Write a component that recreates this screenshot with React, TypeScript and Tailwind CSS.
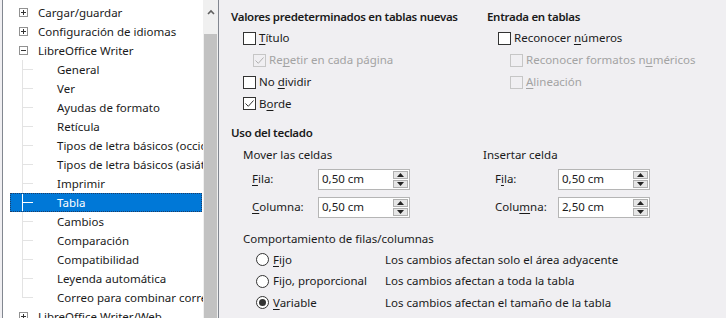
import React from 'react';

const font = { fontFamily: '"Noto Sans", "Open Sans", sans-serif' };

function U({ children }: { children: React.ReactNode }) {
  return <span className="underline underline-offset-2">{children}</span>;
}

function PlusBox({ open }: { open?: boolean }) {
  return (
    <svg width="9" height="9" viewBox="0 0 9 9" className="shrink-0">
      <rect x="0.5" y="0.5" width="8" height="8" fill="#fff" stroke="#919191" />
      <path d="M2 4.5h5" stroke="#333" />
      {!open && <path d="M4.5 2v5" stroke="#333" />}
    </svg>
  );
}

const children = [
  'General',
  'Ver',
  'Ayudas de formato',
  'Retícula',
  'Tipos de letra básicos (occidentales)',
  'Tipos de letra básicos (asiáticos)',
  'Imprimir',
  'Tabla',
  'Cambios',
  'Comparación',
  'Compatibilidad',
  'Leyenda automática',
  'Correo para combinar correspondencia',
];

function Tree() {
  return (
    <div className="relative ml-[2px] flex h-full w-[217px] shrink-0 border-x border-[#828790] bg-white">
      <div className="min-w-0 flex-1 overflow-hidden pt-[3px] text-[#1a1a1a]">
        <div className="flex h-[19px] items-center gap-[10px] whitespace-nowrap pl-[16px]">
          <PlusBox />
          <span>Cargar/guardar</span>
        </div>
        <div className="flex h-[19px] items-center gap-[10px] whitespace-nowrap pl-[16px]">
          <PlusBox />
          <span>Configuración de idiomas</span>
        </div>
        <div className="flex h-[19px] items-center gap-[10px] whitespace-nowrap pl-[16px]">
          <PlusBox open />
          <span>LibreOffice Writer</span>
        </div>
        <div className="relative">
          <div className="absolute left-[19px] top-0 h-[237px] w-px bg-[#e3e3e3]" />
          {children.map((c) =>
            c === 'Tabla' ? (
              <div
                key={c}
                className="relative ml-[7px] mr-px flex h-[19px] items-center whitespace-nowrap border border-dotted border-[#1f3d66] bg-[#0078d7] pl-[46px] text-white"
              >
                <div className="absolute left-[11px] top-[8px] h-px w-[11px] bg-white" />
                <div className="absolute left-[11px] top-0 h-[17px] w-px bg-white" />
                <span>{c}</span>
              </div>
            ) : (
              <div key={c} className="relative flex h-[19px] items-center whitespace-nowrap pl-[54px]">
                <div className="absolute left-[19px] top-[9px] h-px w-[11px] bg-[#e3e3e3]" />
                <span>{c}</span>
              </div>
            ),
          )}
        </div>
        <div className="flex h-[19px] items-center gap-[10px] whitespace-nowrap pl-[16px]">
          <PlusBox />
          <span>LibreOffice Writer/Web</span>
        </div>
      </div>
      <div className="flex w-[15px] shrink-0 flex-col bg-[#f0f0f0]">
        <div className="flex h-[34px] items-start justify-center pt-[9px]">
          <svg width="8" height="6" viewBox="0 0 8 6">
            <path d="M1 5l3-3 3 3" stroke="#606060" strokeWidth="1.6" fill="none" />
          </svg>
        </div>
        <div className="mx-px flex-1 bg-[#c2c2c2]" />
      </div>
    </div>
  );
}

function Check({ checked, disabled }: { checked?: boolean; disabled?: boolean }) {
  const c = disabled ? '#c6c6c6' : '#333';
  return (
    <svg width="13" height="13" viewBox="0 0 13 13" className="shrink-0">
      <rect x="0.5" y="0.5" width="12" height="12" fill={disabled ? '#f0eff2' : '#fff'} stroke={c} />
      {checked && (
        <path d="M2.5 6.5l2.8 2.8 5.2-5.8" stroke={disabled ? '#b0b0b0' : '#333'} fill="none" strokeWidth="1" />
      )}
    </svg>
  );
}

function Radio({ checked }: { checked?: boolean }) {
  return (
    <svg width="13" height="13" viewBox="0 0 13 13" className="shrink-0">
      <circle cx="6.5" cy="6.5" r="6" fill="#fff" stroke="#333" />
      {checked && <circle cx="6.5" cy="6.5" r="3.5" fill="#333" />}
    </svg>
  );
}

function Spin({ value }: { value: string }) {
  return (
    <div className="flex h-[21px] w-[92px] items-center border border-[#b5b5b5] bg-white pl-[3px] pr-[1px]">
      <span className="flex-1">{value}</span>
      <div className="flex w-[15px] flex-col gap-px">
        <div className="flex h-[8px] items-center justify-center border border-[#b0b0b0] bg-[#e6e6e6]">
          <svg width="7" height="4" viewBox="0 0 7 4">
            <path d="M0 4h7L3.5 0z" fill="#222" />
          </svg>
        </div>
        <div className="flex h-[8px] items-center justify-center border border-[#b0b0b0] bg-[#e6e6e6]">
          <svg width="7" height="4" viewBox="0 0 7 4">
            <path d="M0 0h7L3.5 4z" fill="#222" />
          </svg>
        </div>
      </div>
    </div>
  );
}

export default function App() {
  return (
    <div
      className="flex h-[318px] w-[726px] overflow-hidden bg-[#f0eff2] text-[11.5px] text-[#1a1a1a]"
      style={font}
    >
      <Tree />
      <div className="flex flex-1 flex-col pl-[12px] pt-[7px]">
        <div className="flex">
          <div className="w-[256px]">
            <div className="flex h-[20px] items-center font-semibold tracking-[-0.3px]">
              Valores predeterminados en tablas nuevas
            </div>
            <div className="flex h-[22px] items-center gap-[3px] pl-[12px]">
              <Check />
              <span>
                <U>T</U>ítulo
              </span>
            </div>
            <div className="flex h-[22px] items-center gap-[3px] pl-[22px] text-[#a3a3a3]">
              <Check checked disabled />
              <span>
                Re<U>p</U>etir en cada página
              </span>
            </div>
            <div className="flex h-[22px] items-center gap-[3px] pl-[12px]">
              <Check />
              <span>
                No <U>d</U>ividir
              </span>
            </div>
            <div className="flex h-[21px] items-center gap-[3px] pl-[12px]">
              <Check checked />
              <span>
                B<U>o</U>rde
              </span>
            </div>
          </div>
          <div className="flex-1">
            <div className="flex h-[20px] items-center font-semibold tracking-[-0.3px]">Entrada en tablas</div>
            <div className="flex h-[22px] items-center gap-[3px] pl-[11px]">
              <Check />
              <span>
                Reconocer <U>n</U>úmeros
              </span>
            </div>
            <div className="flex h-[22px] items-center gap-[3px] pl-[23px] text-[#a3a3a3]">
              <Check disabled />
              <span>
                Reconocer formatos n<U>u</U>méricos
              </span>
            </div>
            <div className="flex h-[22px] items-center gap-[3px] pl-[23px] text-[#a3a3a3]">
              <Check disabled />
              <span>
                <U>A</U>lineación
              </span>
            </div>
          </div>
        </div>
        <div className="mt-[9px] flex h-[20px] items-center font-semibold tracking-[-0.3px]">Uso del teclado</div>
        <div className="mt-[2px] flex">
          <div className="w-[252px] pl-[12px]">
            <div className="flex h-[20px] items-center">Mover las celdas</div>
            <div className="flex h-[28px] items-center pl-[9px]">
              <span className="w-[66px]">
                <U>F</U>ila:
              </span>
              <Spin value="0,50 cm" />
            </div>
            <div className="flex h-[28px] items-center pl-[9px]">
              <span className="w-[66px]">
                <U>C</U>olumna:
              </span>
              <Spin value="0,50 cm" />
            </div>
          </div>
          <div className="flex-1">
            <div className="flex h-[20px] items-center">Insertar celda</div>
            <div className="flex h-[28px] items-center pl-[12px]">
              <span className="w-[63px]">
                F<U>i</U>la:
              </span>
              <Spin value="0,50 cm" />
            </div>
            <div className="flex h-[28px] items-center pl-[12px]">
              <span className="w-[63px]">
                Colu<U>m</U>na:
              </span>
              <Spin value="2,50 cm" />
            </div>
          </div>
        </div>
        <div className="mt-[8px] pl-[12px]">
          <div className="flex h-[20px] items-center">Comportamiento de filas/columnas</div>
          <div className="flex h-[21px] items-center pl-[13px]">
            <div className="flex w-[129px] items-center gap-[4px]">
              <Radio />
              <span>
                <U>F</U>ijo
              </span>
            </div>
            <span>Los cambios afectan solo el área adyacente</span>
          </div>
          <div className="flex h-[22px] items-center pl-[13px]">
            <div className="flex w-[129px] items-center gap-[4px]">
              <Radio />
              <span>Fijo, proporcional</span>
            </div>
            <span>Los cambios afectan a toda la tabla</span>
          </div>
          <div className="flex h-[21px] items-center pl-[13px]">
            <div className="flex w-[129px] items-center gap-[4px]">
              <Radio checked />
              <span>
                <U>V</U>ariable
              </span>
            </div>
            <span>Los cambios afectan el tamaño de la tabla</span>
          </div>
        </div>
      </div>
    </div>
  );
}
